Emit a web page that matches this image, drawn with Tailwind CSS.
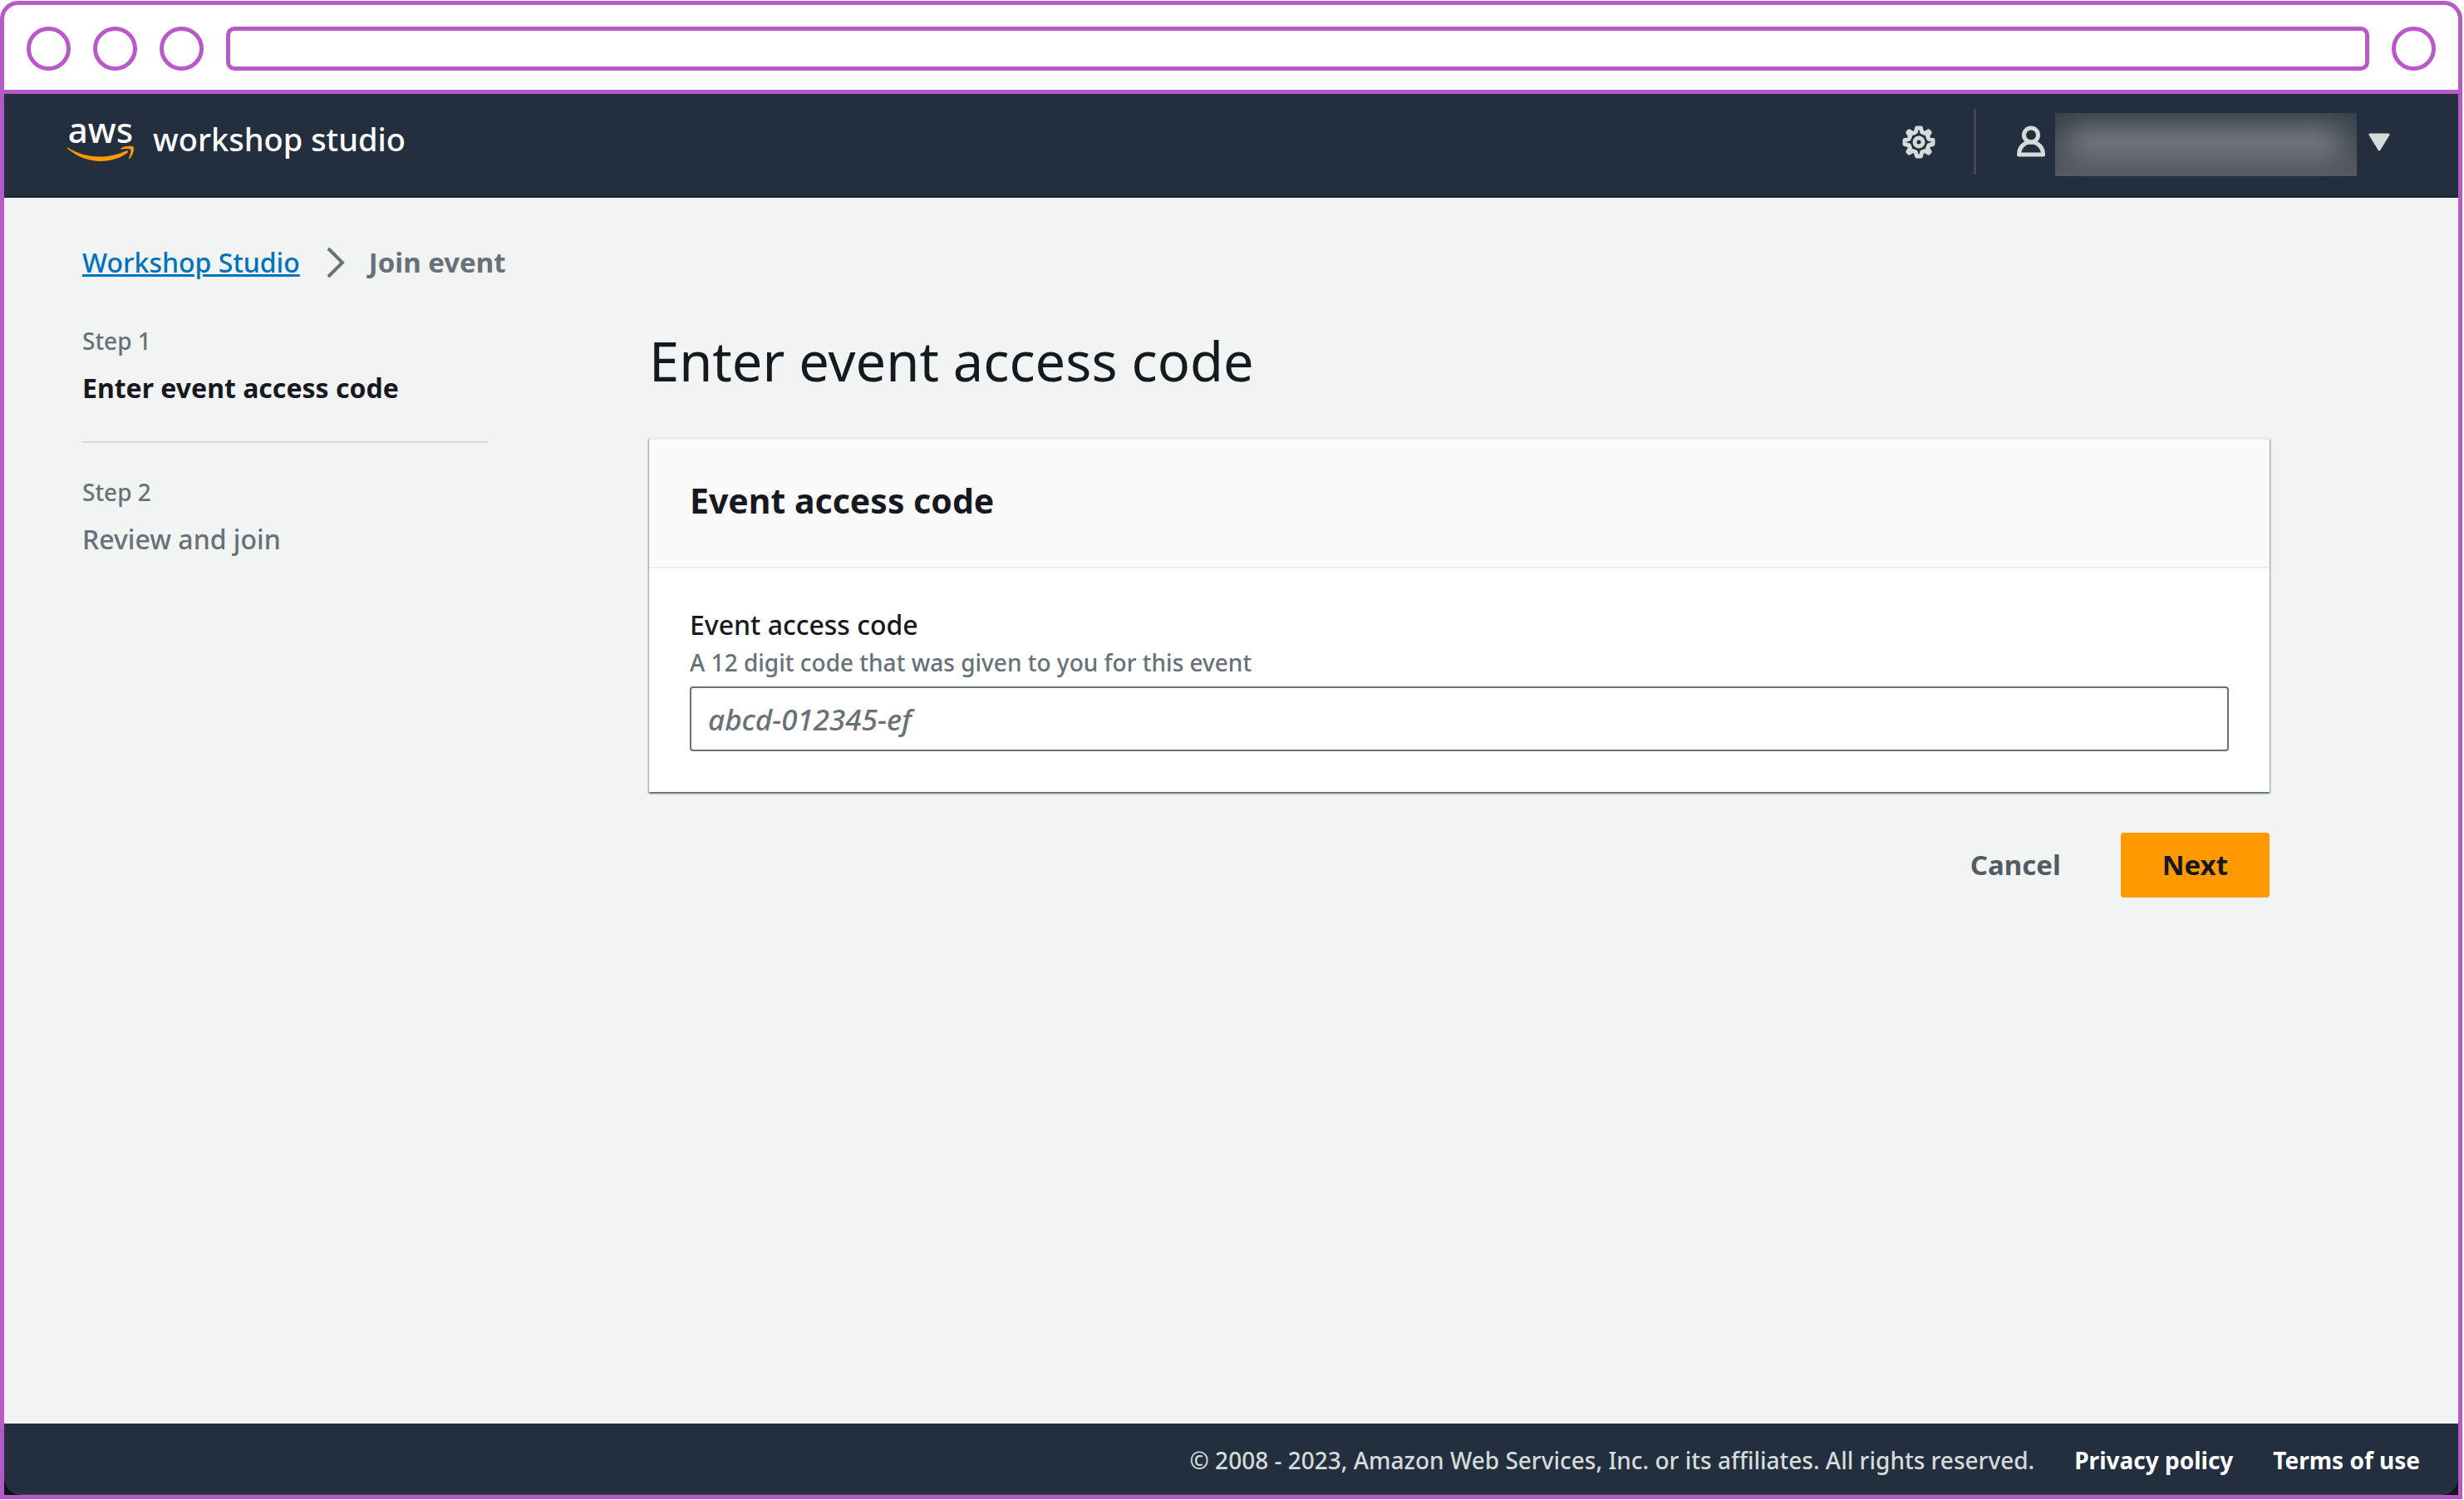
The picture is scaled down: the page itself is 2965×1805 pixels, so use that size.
<!DOCTYPE html>
<html lang="en">
<head>
<meta charset="utf-8">
<meta name="viewport" content="width=device-width, initial-scale=1">
<title>Workshop Studio - Join event</title>
<script src="https://cdn.jsdelivr.net/npm/@tailwindcss/browser@4"></script>
</head>
<body class="flex min-h-screen flex-col bg-white py-px pr-[2px] font-['Noto_Sans',sans-serif] text-[#16191f]">
  <div class="flex flex-1 flex-col rounded-t-[22px] border-[5px] border-[#b958c8] bg-white">
    <!-- Window bar -->
    <div class="flex h-[107px] items-center gap-[27px] border-b-[5px] border-[#b958c8] px-[27px] pt-[3px]">
      <span class="size-[53px] shrink-0 rounded-full border-[5px] border-[#b958c8]"></span>
      <span class="size-[53px] shrink-0 rounded-full border-[5px] border-[#b958c8]"></span>
      <span class="size-[53px] shrink-0 rounded-full border-[5px] border-[#b958c8]"></span>
      <span class="h-[53px] flex-1 rounded-[10px] border-[5px] border-[#b958c8]"></span>
      <span class="size-[53px] shrink-0 rounded-full border-[5px] border-[#b958c8]"></span>
    </div>

    <!-- Top navigation -->
    <header class="flex h-[125px] items-center justify-between border-b-2 border-[#1a2533] bg-[#232f3e] pr-[82px] pb-[8px] pl-[75px]">
      <a href="#" class="flex items-center gap-[22px] pb-[8px] text-white">
        <span class="flex flex-col items-center">
          <span class="text-[42px] leading-[34px] font-medium">aws</span>
          <svg class="mt-[2px] h-[20px] w-[82px]" viewBox="0 0 82 20" fill="#ff9900" aria-hidden="true">
            <path d="M1.500 2.500 C13 9.500 25 13.500 40 13.500 C51 13.500 62 11 72 6.500 C73.600 5.800 75 7.500 73.500 8.800 C65 15.500 53 19 41 19 C25.500 19 11.500 13 .8 3.600 C.2 3 .7 2.100 1.500 2.500Z"/>
            <path d="M77 5 C75.500 3.200 68.500 4.200 66 4.500 C65 4.600 65 3.800 65.800 3.200 C70.500 0 79.500 .3 80.700 1.700 C82 3.300 80.300 12.200 76 15.800 C75.200 16.500 74.600 16 74.900 15.200 C76 12.800 78.200 6.800 77 5Z"/>
          </svg>
        </span>
        <span class="text-[38px] leading-[48px] font-medium">workshop studio</span>
      </a>
      <div class="flex items-center">
        <button type="button" aria-label="Settings" class="text-[#d5dbdb]">
          <svg class="size-[40px]" viewBox="0 0 40 40" fill="none" stroke="currentColor" stroke-width="5" stroke-linejoin="round" aria-hidden="true">
            <path d="M17.500 3 h5 l1.200 5 3.600 1.500 L31.500 6.800 L33.200 8.500 L30.500 12.700 L32 16.300 L37 17.500 v5 L32 23.700 L30.500 27.300 L33.200 31.500 L31.500 33.200 L27.300 30.500 L23.700 32 L22.500 37 h-5 L16.300 32 L12.700 30.500 L8.500 33.200 L6.800 31.500 L9.500 27.300 L8 23.700 L3 22.500 v-5 L8 16.300 L9.500 12.700 L6.800 8.500 L8.500 6.800 L12.700 9.500 L16.300 8Z"/>
            <circle cx="20" cy="20" r="5"/>
          </svg>
        </button>
        <span class="mx-[46px] h-[79px] w-[3px] bg-[#414750]"></span>
        <button type="button" aria-label="Account" class="flex items-center text-[#d5dbdb]">
          <svg class="mr-[9px] h-[40px] w-[40px]" viewBox="0 0 40 40" fill="none" stroke="currentColor" stroke-width="5" stroke-linejoin="round" aria-hidden="true">
            <circle cx="20" cy="11.500" r="8.500"/>
            <path d="M5.500 35 C5.500 26 12 20 20 20 S34.500 26 34.500 35Z"/>
          </svg>
          <span class="mt-[6px] h-[76px] w-[363px] overflow-hidden bg-linear-to-b from-[#36414b] to-[#565a62]">
            <span class="mt-[18px] ml-[14px] block h-[36px] w-[332px] rounded-full bg-[#787d82] blur-[16px]"></span>
          </span>
          <svg class="ml-[14px] h-[22px] w-[26px]" viewBox="0 0 26 22" fill="currentColor" stroke="currentColor" stroke-width="3" stroke-linejoin="round" aria-hidden="true">
            <path d="M2 2 H24 L13 20Z"/>
          </svg>
        </button>
      </div>
    </header>

    <!-- Page body -->
    <main class="flex-1 bg-[#f2f3f3] pt-[54px] pr-[227px] pb-[52px] pl-[94px]">
      <nav aria-label="Breadcrumb" class="flex items-center text-[32px] leading-[48px]">
        <a href="#" class="font-medium text-[#0073bb] underline decoration-[3px]">Workshop Studio</a>
        <svg class="mr-[28px] ml-[31px] h-[38px] w-[24px]" viewBox="0 0 24 38" fill="none" stroke="#687078" stroke-width="4" aria-hidden="true">
          <path d="M3 2 L20 19 L3 36"/>
        </svg>
        <span class="text-[33px] font-bold text-[#687078]">Join event</span>
      </nav>
      <div class="mt-[50px] flex items-start gap-[194px]">
        <ol class="w-[488px] shrink-0">
          <li class="border-b-2 border-[#d5dbdb] pb-[40px]">
            <p class="text-[28px] leading-[40px] font-medium text-[#687078]">Step 1</p>
            <p class="mt-[13px] text-[32px] leading-[48px] font-bold">Enter event access code</p>
          </li>
          <li class="pt-[39px] font-medium text-[#687078]">
            <p class="text-[28px] leading-[40px]">Step 2</p>
            <p class="mt-[13px] text-[32px] leading-[48px]">Review and join</p>
          </li>
        </ol>
        <form class="flex-1 pt-[4px]">
          <h1 class="text-[65px] leading-[80px]">Enter event access code</h1>
          <section class="mt-[53px] bg-white shadow-[0_2px_2px_0_rgba(0,28,36,0.5),1px_1px_2px_0_rgba(0,28,36,0.25),-1px_1px_2px_0_rgba(0,28,36,0.25)]">
            <div class="border-y-2 border-[#eaeded] bg-[#fafafa] px-[49px] pt-[49px] pb-[55px]">
              <h2 class="text-[41px] leading-[49px] font-bold">Event access code</h2>
            </div>
            <div class="px-[49px] pt-[46px] pb-[49px]">
              <label for="code" class="block text-[32px] leading-[44px] font-medium">Event access code</label>
              <p id="hint" class="mt-[3px] text-[28px] leading-[40px] font-medium text-[#687078]">A 12 digit code that was given to you for this event</p>
              <input id="code" type="text" aria-describedby="hint" placeholder="abcd-012345-ef" class="mt-[9px] block h-[78px] w-full rounded-[4px] border-2 border-[#687078] bg-white px-[20px] text-[35px] font-medium placeholder:text-[#687078] placeholder:italic">
            </div>
          </section>
          <div class="mt-[49px] flex justify-end gap-[22px] text-[33px] leading-[48px] font-bold">
            <button type="button" class="h-[78px] px-[50px] text-[#545b64]">Cancel</button>
            <button type="submit" class="h-[78px] rounded-[4px] bg-[#ff9900] px-[50px]">Next</button>
          </div>
        </form>
      </div>
    </main>

    <!-- Footer -->
    <div class="bg-[#111315]">
      <footer class="flex h-[86px] items-center justify-end gap-[48px] rounded-b-[22px] border-b border-[#414d5c] bg-[#232f3e] pt-[2px] pr-[46px] text-[28px] text-[#d5dbdb]">
        <p class="font-medium">© 2008 - 2023, Amazon Web Services, Inc. or its affiliates. All rights reserved.</p>
        <a href="#" class="font-bold text-white">Privacy policy</a>
        <a href="#" class="font-bold text-white">Terms of use</a>
      </footer>
    </div>
  </div>
</body>
</html>
